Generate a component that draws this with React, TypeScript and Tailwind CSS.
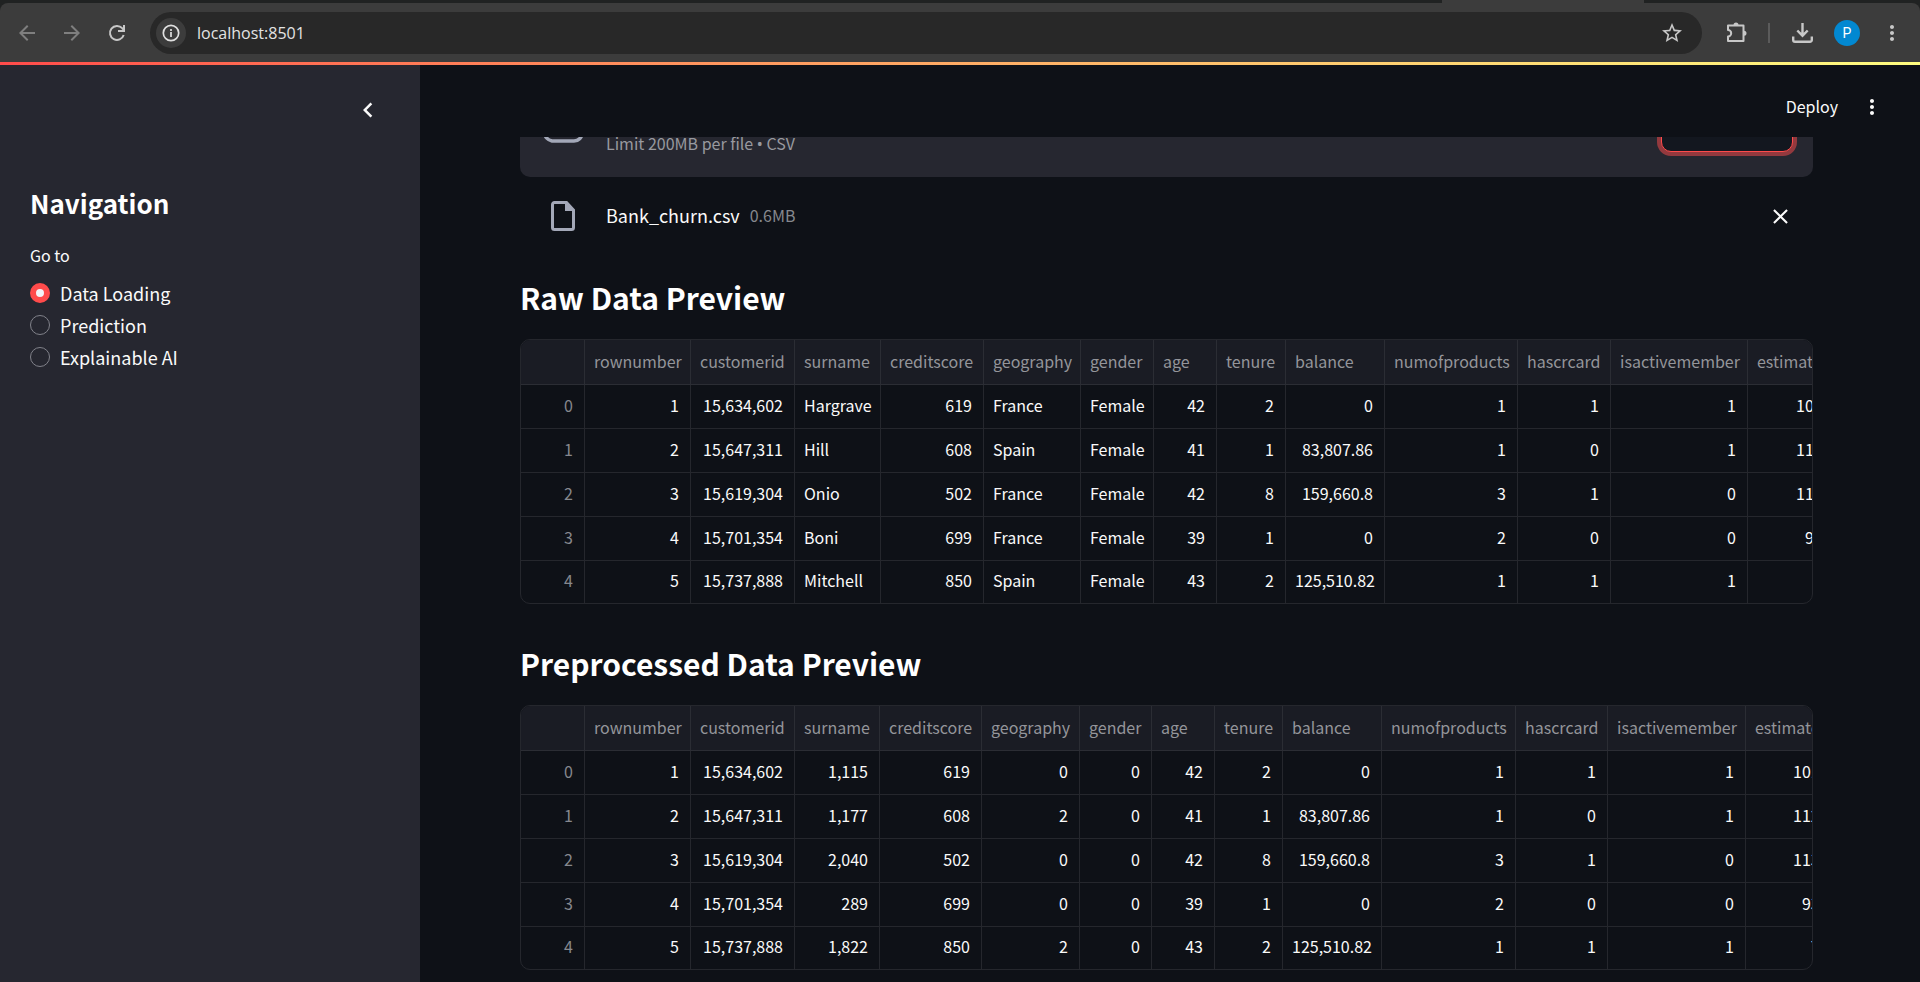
import React from "react";
import { MdArrowBack, MdArrowForward, MdChevronLeft, MdClose, MdMoreVert, MdStarBorder } from "react-icons/md";

type Preview = { title: string; widths: number[]; textColumns: number[]; rows: string[][] };

const columns = [
  "",
  "rownumber",
  "customerid",
  "surname",
  "creditscore",
  "geography",
  "gender",
  "age",
  "tenure",
  "balance",
  "numofproducts",
  "hascrcard",
  "isactivemember",
  "estimatedsalary",
];

const previews: Preview[] = [
  {
    title: "Raw Data Preview",
    widths: [64, 106, 104, 86, 103, 97, 73, 63, 69, 99, 133, 93, 137, 140],
    textColumns: [3, 5, 6],
    rows: [
      ["0", "1", "15,634,602", "Hargrave", "619", "France", "Female", "42", "2", "0", "1", "1", "1", "101,348.88"],
      ["1", "2", "15,647,311", "Hill", "608", "Spain", "Female", "41", "1", "83,807.86", "1", "0", "1", "112,542.58"],
      ["2", "3", "15,619,304", "Onio", "502", "France", "Female", "42", "8", "159,660.8", "3", "1", "0", "113,931.57"],
      ["3", "4", "15,701,354", "Boni", "699", "France", "Female", "39", "1", "0", "2", "0", "0", "93,826.63"],
      ["4", "5", "15,737,888", "Mitchell", "850", "Spain", "Female", "43", "2", "125,510.82", "1", "1", "1", "79,084.1"],
    ],
  },
  {
    title: "Preprocessed Data Preview",
    widths: [64, 106, 104, 85, 102, 98, 72, 63, 68, 99, 134, 92, 138, 139],
    textColumns: [],
    rows: [
      ["0", "1", "15,634,602", "1,115", "619", "0", "0", "42", "2", "0", "1", "1", "1", "101,348.88"],
      ["1", "2", "15,647,311", "1,177", "608", "2", "0", "41", "1", "83,807.86", "1", "0", "1", "112,542.58"],
      ["2", "3", "15,619,304", "2,040", "502", "0", "0", "42", "8", "159,660.8", "3", "1", "0", "113,931.57"],
      ["3", "4", "15,701,354", "289", "699", "0", "0", "39", "1", "0", "2", "0", "0", "93,826.63"],
      ["4", "5", "15,737,888", "1,822", "850", "2", "0", "43", "2", "125,510.82", "1", "1", "1", "79,084.1"],
    ],
  },
];

function BrowserBar() {
  return (
    <div className="shrink-0 bg-[#202222] font-['Open_Sans',sans-serif]">
      <div className="flex h-[3px] justify-end pr-[276px]">
        <svg width="202" height="3" viewBox="0 0 202 3" fill="#3c3c3c">
          <path d="M0 0h202q2 2 8 3H-8q6-1 8-3z" />
        </svg>
      </div>
      <div className="flex h-[59px] items-center rounded-t-lg bg-[#3c3c3c] text-[#c7c7c7]">
        <div className="flex items-center gap-[21px] pl-[15px]">
          <button aria-label="Back" className="text-[#7f7f7f]">
            <MdArrowBack size={24} />
          </button>
          <button aria-label="Forward" className="text-[#7f7f7f]">
            <MdArrowForward size={24} />
          </button>
          <button aria-label="Reload">
            <svg width="24" height="24" viewBox="0 0 24 24" fill="none" stroke="currentColor" strokeWidth="2">
              <path d="M18.700 14A7 7 0 1 1 17.200 7.200L19 9" />
              <path d="M19 4v6h-6" />
            </svg>
          </button>
        </div>
        <div className="ml-[21px] flex h-[42px] flex-1 items-center rounded-full bg-[#282828] pr-[18px] pl-[6px]">
          <button aria-label="Site information" className="flex size-[30px] items-center justify-center rounded-full bg-[#3c3c3c]">
            <svg width="18" height="18" viewBox="0 0 18 18" fill="none" stroke="#e0e0e0" strokeWidth="1.7">
              <circle cx="9" cy="9" r="7.700" />
              <path d="M9 8v5M9 5v2" />
            </svg>
          </button>
          <input
            aria-label="Address"
            defaultValue="localhost:8501"
            className="ml-[11px] min-w-0 flex-1 bg-transparent text-[16px] leading-6 text-[#e3e3e3] outline-none"
          />
          <button aria-label="Bookmark this page">
            <MdStarBorder size={24} />
          </button>
        </div>
        <div className="flex items-center pr-4 pl-[22px]">
          <button aria-label="Extensions">
            <svg width="24" height="24" viewBox="0 0 24 24" fill="none" stroke="currentColor" strokeWidth="2">
              <path d="M4 4.500h15.500v15.500H4v-4.500a3.200 3.200 0 0 0 0-6.400z" strokeLinejoin="round" />
              <path d="M9.500 4a2.500 2.500 0 0 1 5 0zM20 9.700a2.500 2.500 0 0 1 0 5z" fill="currentColor" stroke="none" />
            </svg>
          </button>
          <div className="ml-5 h-5 w-[2px] bg-[#5b5b5b]" />
          <button aria-label="Downloads" className="ml-5">
            <svg width="24" height="24" viewBox="0 0 24 24" fill="none" stroke="currentColor" strokeWidth="2.400">
              <path d="M12.500 2v12M7.300 9.500l5.200 5.200 5.200-5.200" />
              <path d="M3.200 15.500V19A1.800 1.800 0 0 0 5 20.800h15a1.800 1.800 0 0 0 1.800-1.800v-3.500" />
            </svg>
          </button>
          <button className="ml-5 flex size-[26px] items-center justify-center rounded-full bg-[#0288d1] font-[Roboto,sans-serif] text-[14px] leading-4 text-white">
            P
          </button>
          <button aria-label="Browser menu" className="ml-5">
            <MdMoreVert size={24} />
          </button>
        </div>
      </div>
    </div>
  );
}

function Sidebar() {
  return (
    <aside className="w-[420px] shrink-0 bg-[#262730] px-[30px]">
      <div className="flex justify-end pt-[30px] pr-[7px]">
        <button aria-label="Collapse sidebar">
          <MdChevronLeft size={30} />
        </button>
      </div>
      <h2 className="mt-[60px] text-[26px] leading-9 font-semibold text-white">Navigation</h2>
      <fieldset className="mt-[22px]">
        <legend className="text-[16px] leading-6">Go to</legend>
        <div className="mt-[10px] flex flex-col">
          {["Data Loading", "Prediction", "Explainable AI"].map((label, i) => (
            <label key={label} className="flex h-8 items-center gap-[10px] text-[18px] leading-6">
              <input
                type="radio"
                name="page"
                defaultChecked={i === 0}
                className="size-5 appearance-none rounded-full border border-[#81828a] checked:border-[6px] checked:border-[#ff4b4b] checked:bg-[#f3f4f7]"
              />
              {label}
            </label>
          ))}
        </div>
      </fieldset>
    </aside>
  );
}

function Uploader() {
  return (
    <section>
      <div className="flex h-10 items-end overflow-hidden rounded-b-[10px] bg-[#262730] pr-5 pl-5">
        <svg className="mb-[34px] shrink-0" width="45" height="30" viewBox="0 0 45 30" fill="none" stroke="#a3a8b8" strokeWidth="3.600">
          <path d="M12 28A9.500 9.500 0 0 1 10 10a13 13 0 0 1 24 2A8 8 0 0 1 34 28z" />
        </svg>
        <p className="mb-[25px] ml-[21px] flex-1 text-[16px] leading-4 text-[#98999f]">
          Limit 200MB per file <span className="font-['Noto_Sans',sans-serif]">•</span> CSV
        </p>
        <button
          aria-label="Browse files"
          className="mb-[25px] h-[50px] w-[132px] rounded-[10px] border border-[#ff4b4b] bg-[#13171f] ring-4 ring-[#ff4b4b]/50"
        />
      </div>
      <div className="flex h-[78px] items-center pr-5 pl-[31px]">
        <svg width="24" height="30" viewBox="0 0 24 30" fill="none">
          <path d="M3.500 1.500h12L22.500 9v17.500a2 2 0 0 1-2 2h-17a2 2 0 0 1-2-2V3.500a2 2 0 0 1 2-2z" stroke="#a3a8b8" strokeWidth="3" />
          <path d="M14 0l10 10H14z" fill="#a3a8b8" />
        </svg>
        <span className="ml-[31px] pb-[2px] text-[18px] leading-6">Bank_churn.csv</span>
        <span className="ml-[10px] flex-1 pb-[2px] text-[16px] leading-6 text-[#86888e]">0.6MB</span>
        <button aria-label="Remove file" className="flex size-[26px] items-center justify-center">
          <MdClose size={25} />
        </button>
      </div>
    </section>
  );
}

function DataPreview({ title, widths, textColumns, rows }: Preview) {
  const total = widths.reduce((sum, w) => sum + w, 0);
  return (
    <section>
      <h2 className="text-[30px] leading-9 font-semibold text-white">{title}</h2>
      <div className="mt-6 overflow-hidden rounded-[10px] border border-[#25272d]">
        <table className="table-fixed border-separate border-spacing-0 text-[16px] leading-6" style={{ width: total }}>
          <colgroup>
            {widths.map((w, i) => (
              <col key={i} style={{ width: w }} />
            ))}
          </colgroup>
          <thead>
            <tr className="h-[45px] bg-[#1a1c24] text-left text-[#94959a]">
              {columns.map((name, i) => (
                <th key={i} className="border-r border-b border-[#2b2d34] pt-0 pr-0 pb-[2px] pl-[9px] font-normal">
                  {name}
                </th>
              ))}
            </tr>
          </thead>
          <tbody>
            {rows.map((row) => (
              <tr key={row[0]} className="h-11 last:h-[42px] last:[&>td]:border-b-0">
                {row.map((value, i) => (
                  <td
                    key={i}
                    className={`border-r border-b border-[#25272d] pt-0 pr-[11px] pb-1 pl-[9px] whitespace-nowrap ${
                      textColumns.includes(i) ? "text-left" : "text-right"
                    } ${i === 0 ? "text-[#86888e]" : ""}`}
                  >
                    {value}
                  </td>
                ))}
              </tr>
            ))}
          </tbody>
        </table>
      </div>
    </section>
  );
}

export default function App() {
  return (
    <div className="flex h-screen flex-col overflow-hidden bg-[#0e1117] font-['Noto_Sans_CJK_SC',sans-serif] text-[#fafafa]">
      <BrowserBar />
      <div className="h-[3px] shrink-0 bg-linear-to-r from-[#ff4b4b] to-[#fffd80]" />
      <div className="flex min-h-0 flex-1">
        <Sidebar />
        <main className="flex min-w-0 flex-1 flex-col">
          <header className="flex h-[72px] shrink-0 items-center justify-end gap-[22px] pt-3 pr-9">
            <button className="pb-[2px] text-[16px] leading-6">Deploy</button>
            <button aria-label="Main menu">
              <MdMoreVert size={24} />
            </button>
          </header>
          <div className="min-h-0 flex-1 overflow-hidden pr-[107px] pl-[100px]">
            <Uploader />
            <div className="mt-6 flex flex-col gap-[41px]">
              {previews.map((preview) => (
                <DataPreview key={preview.title} {...preview} />
              ))}
            </div>
          </div>
        </main>
      </div>
    </div>
  );
}
